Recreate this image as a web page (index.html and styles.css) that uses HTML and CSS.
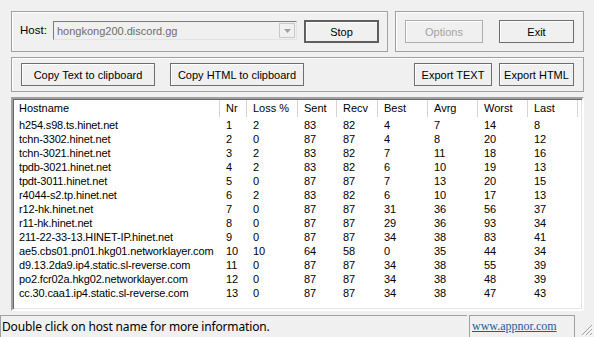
FILE: index.html
```html
<!DOCTYPE html>
<html>
<head>
<meta charset="utf-8">
<link rel="stylesheet" href="styles.css">
</head>
<body>
<div class="app">
  <div class="top">
    <div class="group host-group">
      <span class="label">Host:</span>
      <div class="combo">
        <span class="combo-text">hongkong200.discord.gg</span>
        <span class="combo-btn"><svg width="7" height="4" viewBox="0 0 7 4"><path d="M0 0h7L3.5 4z" fill="#a0a0a0"/></svg></span>
      </div>
      <button class="btn btn-default stop">Stop</button>
    </div>
    <div class="group ctl-group">
      <button class="btn btn-disabled options">Options</button>
      <button class="btn exit">Exit</button>
    </div>
  </div>
  <div class="group export-group">
    <button class="btn copy">Copy Text to clipboard</button>
    <button class="btn copy">Copy HTML to clipboard</button>
    <span class="spacer"></span>
    <button class="btn export-text">Export TEXT</button>
    <button class="btn export-html">Export HTML</button>
  </div>
  <div class="list">
    <div class="lrow head">
      <span>Hostname</span><span>Nr</span><span>Loss %</span><span>Sent</span><span>Recv</span><span>Best</span><span>Avrg</span><span>Worst</span><span>Last</span>
    </div>
    <div class="lrow"><span>h254.s98.ts.hinet.net</span><span>1</span><span>2</span><span>83</span><span>82</span><span>4</span><span>7</span><span>14</span><span>8</span></div>
    <div class="lrow"><span>tchn-3302.hinet.net</span><span>2</span><span>0</span><span>87</span><span>87</span><span>4</span><span>8</span><span>20</span><span>12</span></div>
    <div class="lrow"><span>tchn-3021.hinet.net</span><span>3</span><span>2</span><span>83</span><span>82</span><span>7</span><span>11</span><span>18</span><span>16</span></div>
    <div class="lrow"><span>tpdb-3021.hinet.net</span><span>4</span><span>2</span><span>83</span><span>82</span><span>6</span><span>10</span><span>19</span><span>13</span></div>
    <div class="lrow"><span>tpdt-3011.hinet.net</span><span>5</span><span>0</span><span>87</span><span>87</span><span>7</span><span>13</span><span>20</span><span>15</span></div>
    <div class="lrow"><span>r4044-s2.tp.hinet.net</span><span>6</span><span>2</span><span>83</span><span>82</span><span>6</span><span>10</span><span>17</span><span>13</span></div>
    <div class="lrow"><span>r12-hk.hinet.net</span><span>7</span><span>0</span><span>87</span><span>87</span><span>31</span><span>36</span><span>56</span><span>37</span></div>
    <div class="lrow"><span>r11-hk.hinet.net</span><span>8</span><span>0</span><span>87</span><span>87</span><span>29</span><span>36</span><span>93</span><span>34</span></div>
    <div class="lrow"><span>211-22-33-13.HINET-IP.hinet.net</span><span>9</span><span>0</span><span>87</span><span>87</span><span>34</span><span>38</span><span>83</span><span>41</span></div>
    <div class="lrow"><span>ae5.cbs01.pn01.hkg01.networklayer.com</span><span>10</span><span>10</span><span>64</span><span>58</span><span>0</span><span>35</span><span>44</span><span>34</span></div>
    <div class="lrow"><span>d9.13.2da9.ip4.static.sl-reverse.com</span><span>11</span><span>0</span><span>87</span><span>87</span><span>34</span><span>38</span><span>55</span><span>39</span></div>
    <div class="lrow"><span>po2.fcr02a.hkg02.networklayer.com</span><span>12</span><span>0</span><span>87</span><span>87</span><span>34</span><span>38</span><span>48</span><span>39</span></div>
    <div class="lrow"><span>cc.30.caa1.ip4.static.sl-reverse.com</span><span>13</span><span>0</span><span>87</span><span>87</span><span>34</span><span>38</span><span>47</span><span>43</span></div>
  </div>
</div>
<div class="status">
  <div class="pane main-pane">Double click on host name for more information.</div>
  <div class="pane link-pane"><a class="link" href="#">www.appnor.com</a></div>
  <div class="grip"><svg width="12" height="12" viewBox="0 0 12 12"><path d="M11 1L1 11M11 5L5 11M11 9L9 11" stroke="#a0a0a0" stroke-width="1"/><path d="M12 2L2 12M12 6L6 12M12 10L10 12" stroke="#fff" stroke-width="1"/></svg></div>
</div>
</body>
</html>
```

FILE: styles.css
```css
* { box-sizing: border-box; }
html, body {
  margin: 0;
  padding: 0;
  width: 594px;
  height: 337px;
  overflow: hidden;
  background: #f0f0f0;
  font-family: "Liberation Sans", Arial, sans-serif;
  font-size: 11px;
  color: #000;
}
.app {
  padding: 11px 10px 0 11px;
  display: flex;
  flex-direction: column;
  gap: 5px;
}
.top {
  display: flex;
  gap: 7px;
}
.group {
  border: 1px solid #a0a0a0;
  box-shadow: inset 1px 1px 0 #fff;
  display: flex;
  align-items: flex-start;
}
.host-group {
  width: 377px;
  height: 41px;
  padding: 8px 0 0 8px;
}
.label {
  margin-top: 4px;
  width: 33px;
  font-size: 11.5px;
}
.combo {
  margin-top: 1px;
  width: 244px;
  height: 19px;
  border: 1px solid;
  border-color: #7a7a7a #e3e3e3 #e3e3e3 #7a7a7a;
  background: #f0f0f0;
  display: flex;
  align-items: center;
  padding: 0 1px 0 3px;
}
.combo-text {
  flex: 1;
  color: #6d6d6d;
  font-size: 11px;
}
.combo-btn {
  width: 16px;
  height: 15px;
  border: 1px solid #c8c8c8;
  display: flex;
  align-items: center;
  justify-content: center;
  background: #f0f0f0;
}
.btn {
  font: inherit;
  font-size: 11px;
  height: 23px;
  padding: 0;
  margin: 0;
  background: #f0f0f0;
  border: 1px solid #6e6e6e;
  box-shadow: inset 1px 1px 0 #fff;
  color: #000;
}
.btn-default {
  border: 2px solid #5f5f5f;
}
.btn-disabled {
  color: #a3a3a3;
  border-color: #adadad;
}
.stop { width: 75px; margin-left: 7px; }
.ctl-group {
  width: 189px;
  height: 41px;
  padding: 8px 0 0 9px;
  gap: 16px;
}
.options { width: 78px; }
.exit { width: 75px; }
.export-group {
  height: 35px;
  padding: 5px 9px 0 9px;
  gap: 15px;
}
.copy { width: 134px; }
.spacer { flex: 1; }
.export-text { width: 78px; margin-right: -8px; }
.export-html { width: 75px; }
.list {
  width: 573px;
  height: 214px;
  background: #fff;
  border: 2px solid;
  border-color: #a0a0a0 #fff #fff #a0a0a0;
  box-shadow: inset 1px 1px 0 #696969, inset -1px -1px 0 #e3e3e3;
  padding-top: 1px;
  padding-left: 1px;
}
.lrow {
  display: grid;
  grid-template-columns: 205px 27px 51px 39px 41px 50px 50px 50px 51px;
  height: 14px;
  line-height: 14px;
  white-space: nowrap;
  letter-spacing: -0.15px;
}
.lrow span {
  padding-left: 7px;
  overflow: hidden;
}
.lrow span:first-child { padding-left: 5px; }
.head {
  height: 17px;
  line-height: 17px;
  margin-bottom: 1px;
  letter-spacing: 0;
}
.head span {
  border-left: 1px solid #d5d5d5;
  padding-left: 6px;
}
.head span:first-child {
  border-left: none;
  padding-left: 5px;
}
.head span:last-child {
  border-right: 1px solid #d5d5d5;
}
.status {
  position: absolute;
  left: 0;
  top: 315px;
  width: 594px;
  height: 22px;
  display: flex;
}
.pane {
  height: 22px;
  border-top: 1px solid #a0a0a0;
}
.main-pane {
  width: 467px;
  border-left: 1px solid #a0a0a0;
  padding-left: 1px;
  font-family: "Noto Sans", "Open Sans", sans-serif;
  font-size: 12px;
  line-height: 21px;
  letter-spacing: -0.15px;
}
.link-pane {
  margin-left: 2px;
  width: 106px;
  border-left: 1px solid #a0a0a0;
  border-right: 1px solid #a0a0a0;
  padding-left: 2px;
  line-height: 21px;
}
.link {
  font-family: "Liberation Serif", "Times New Roman", serif;
  font-size: 12px;
  color: #1c5c9e;
  text-decoration: underline;
}
.grip {
  flex: 1;
  display: flex;
  justify-content: flex-end;
  align-items: flex-end;
  padding: 0 1px 1px 0;
}
```
